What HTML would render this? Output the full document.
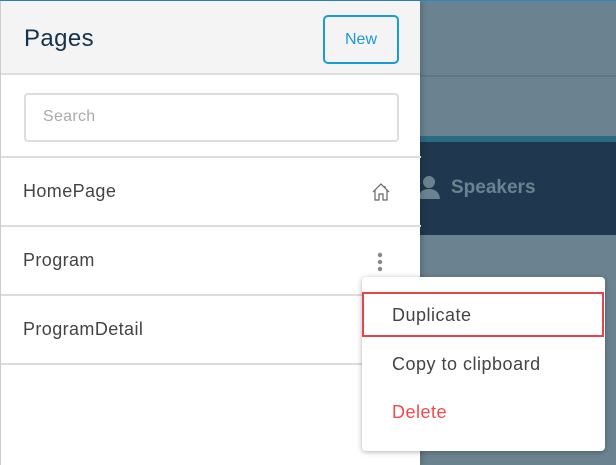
<!DOCTYPE html>
<html><head><style>
*{margin:0;padding:0;box-sizing:border-box}
body{width:616px;height:465px;overflow:hidden;position:relative;background:#6b8390;font-family:"Liberation Sans",sans-serif}
.topline{position:absolute;left:0;top:0;width:616px;height:1px;background:#2a8bc8}
.r1{position:absolute;left:420px;top:75px;width:196px;height:2px;background:#5f7784}
.teal{position:absolute;left:420px;top:136px;width:196px;height:6px;background:#2b6b82}
.navy{position:absolute;left:420px;top:142px;width:196px;height:93px;background:#20384f}
.spk{position:absolute;left:451px;top:177px;color:#6b8390;font-size:19px;font-weight:bold}
.panel{position:absolute;left:0;top:1px;width:420px;height:464px;background:#fff;border-left:1px solid #ccc;box-shadow:2px 0 6px rgba(0,0,0,.2)}
.head{height:74px;background:#f4f4f4;border-bottom:2px solid #ddd;position:relative}
.head h1{position:absolute;left:23px;top:24px;font-weight:normal;font-size:24px;color:#14324a;letter-spacing:.4px}
.new{position:absolute;left:322px;top:14px;width:76px;height:49px;border:2px solid #1a9ad6;border-radius:5px;color:#1a9ad6;font-size:16px;text-align:center;line-height:45px}
.srch{position:absolute;left:23px;top:92px;width:375px;height:49px;border:2px solid #ddd;border-radius:4px;color:#aaa;font-size:16px;padding:13px 0 0 17px;letter-spacing:.3px}
.sep{position:absolute;left:0;top:155px;width:420px;height:2px;background:#ddd}
.row{position:absolute;left:0;width:420px;height:69px;border-bottom:2px solid #ddd;font-size:18px;color:#444;padding:23px 0 0 22px;letter-spacing:.4px}
.menu{position:absolute;left:362px;top:277px;width:243px;height:174px;background:#fff;border-radius:4px;box-shadow:0 1px 6px rgba(0,0,0,.3)}
.menu div{position:absolute;left:30px;font-size:18px;color:#444;letter-spacing:.5px}
.hl{position:absolute;left:362px;top:292px;width:242px;height:45px;border:2px solid #e8434a}
</style></head><body>
<div class="topline"></div><div class="r1"></div><div class="teal"></div><div class="navy"></div>
<svg style="position:absolute;left:418px;top:174px" width="22" height="26" viewBox="0 0 22 26"><circle cx="11" cy="8" r="6" fill="#6b8390"/><path d="M0 25 Q1 15 11 15 Q21 15 22 25Z" fill="#6b8390"/></svg>
<div class="spk">Speakers</div>
<div class="panel">
<div class="head"><h1>Pages</h1><div class="new">New</div></div>
<div class="srch">Search</div>
<div class="sep"></div>
<div class="row" style="top:157px">HomePage</div>
<div class="row" style="top:226px">Program</div>
<div class="row" style="top:295px">ProgramDetail</div>
<svg style="position:absolute;left:370px;top:181px" width="20" height="20" viewBox="0 0 20 20" fill="none" stroke="#666" stroke-width="1.2"><path d="M2 10 L10 2 L18 10 M4 8 V18 H8 V12 H12 V18 H16 V8 M14 4 V6"/></svg>
<svg style="position:absolute;left:375px;top:251px" width="8" height="22"><circle cx="4" cy="3" r="2.2" fill="#888"/><circle cx="4" cy="10" r="2.2" fill="#888"/><circle cx="4" cy="17" r="2.2" fill="#888"/></svg>
</div>
<div class="menu">
<div style="top:28px">Duplicate</div>
<div style="top:77px">Copy to clipboard</div>
<div style="top:125px;color:#f0494f">Delete</div>
</div>
<div class="hl"></div>
</body></html>
